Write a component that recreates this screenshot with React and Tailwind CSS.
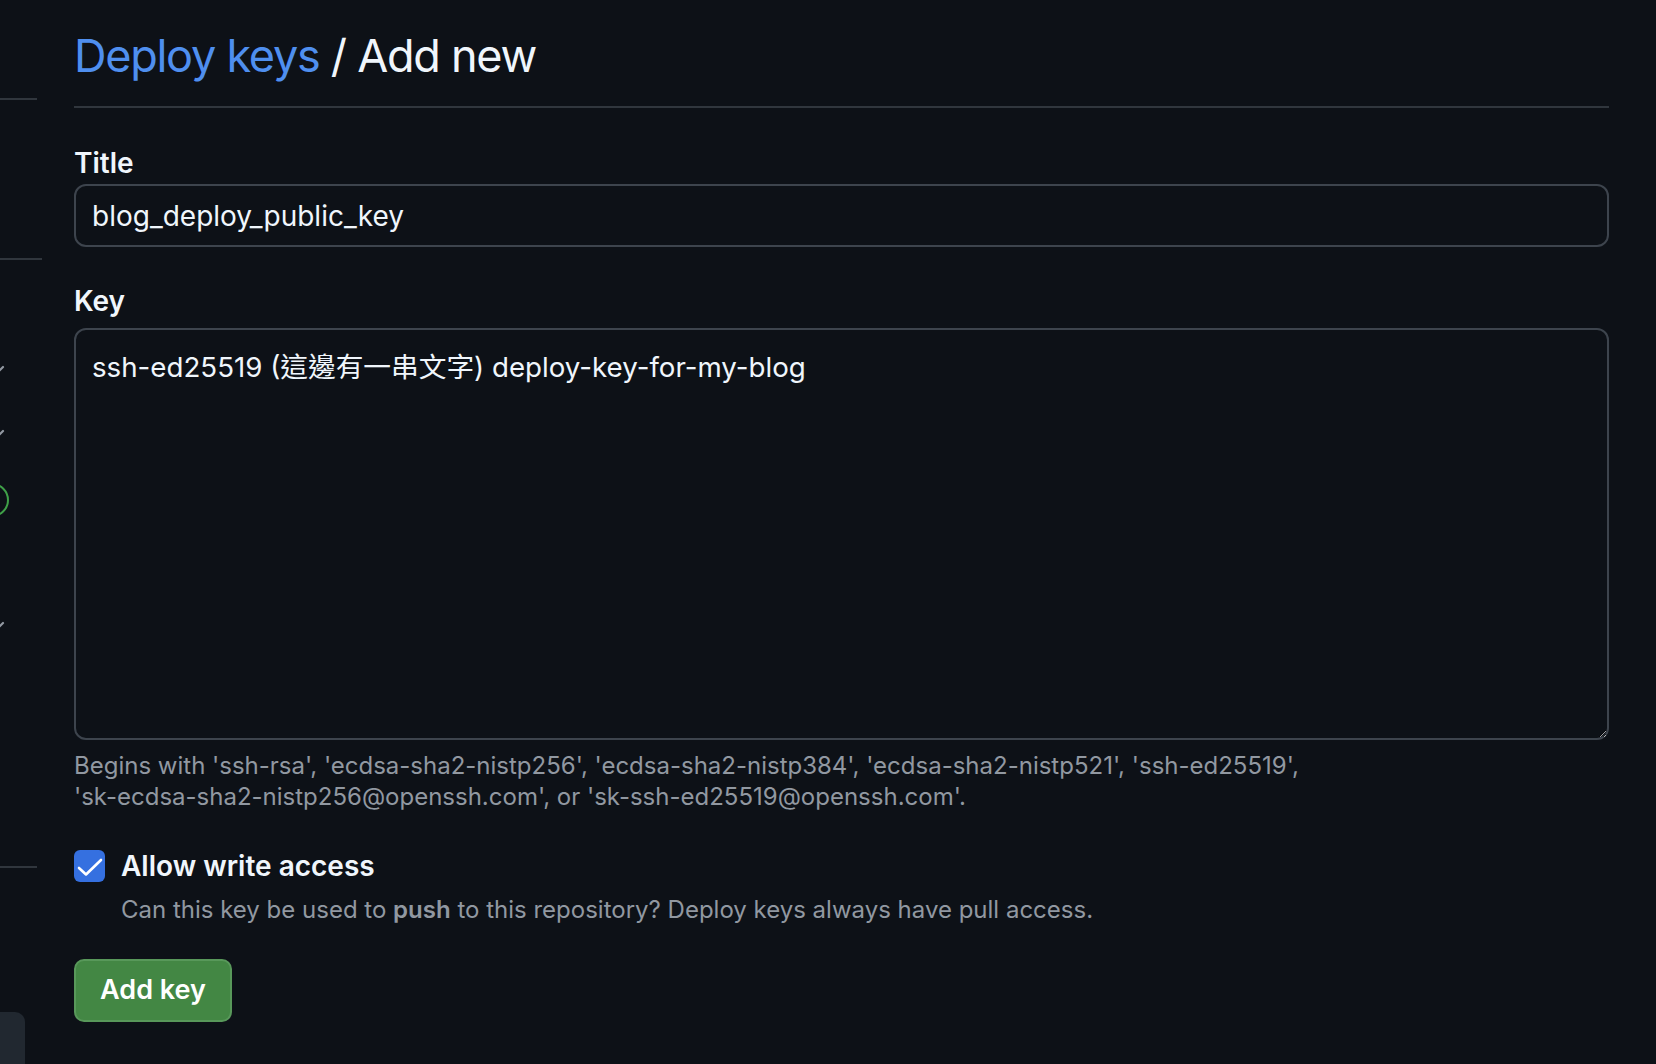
import React from "react";

const font = "font-['Inter','Noto_Sans_CJK_TC',sans-serif]";

const SideCheck = ({ className }) => (
  <svg width="20" height="20" viewBox="0 0 20 20" className={`shrink-0 ${className}`}>
    <path d="M3 10l5 5 9-9" fill="none" stroke="#9198a1" strokeWidth="2.2" strokeLinecap="round" strokeLinejoin="round" />
  </svg>
);

const Sidebar = () => (
  <div className="w-[42px] shrink-0 overflow-hidden flex flex-col">
    <div className="h-[100px] w-[37px] shrink-0 border-b-2 border-[#30363d]" />
    <div className="h-[160px] w-[42px] shrink-0 border-b-2 border-[#30363d]" />
    <SideCheck className="-ml-[14px] mt-[101px]" />
    <SideCheck className="-ml-[14px] mt-[44px]" />
    <div className="-ml-[25px] mt-[38px] h-[34px] w-[34px] shrink-0 rounded-full border-2 border-[#3fa048]" />
    <SideCheck className="-ml-[14px] mt-[100px]" />
    <div className="mt-[229px] w-[37px] shrink-0 border-b-2 border-[#30363d]" />
    <div className="mt-[144px] h-[60px] w-[25px] shrink-0 rounded-tr-[10px] bg-[#212830]" />
  </div>
);

const Label = ({ children }) => (
  <div className="text-[28px] font-semibold leading-[34px] text-[#f0f6fc]">{children}</div>
);

export default function App() {
  return (
    <div className={`${font} flex h-[1064px] w-full overflow-hidden bg-[#0d1117]`}>
      <Sidebar />
      <div className="flex-1 pl-[32px] pr-[47px]">
        <div className="pt-[26px] pb-[20px] border-b-2 border-[#30363d] text-[45px] leading-[60px] tracking-[-0.028em] text-[#f0f6fc]">
          <span className="text-[#4f8fef]">Deploy keys</span> / Add new
        </div>

        <div className="mt-[38px]">
          <Label>Title</Label>
          <div className="mt-[4px] flex h-[63px] items-center rounded-[12px] border-2 border-[#3d444d] px-[16px] text-[28px] text-[#f0f6fc]">
            blog_deploy_public_key
          </div>
        </div>

        <div className="mt-[37px]">
          <Label>Key</Label>
          <textarea
            readOnly
            value="ssh-ed25519 (這邊有一串文字) deploy-key-for-my-blog"
            className="mt-[10px] block h-[412px] w-full resize-y rounded-[12px] border-2 border-[#3d444d] bg-[#0d1117] px-[16px] pt-[18px] pb-[14px] text-[27.7px] leading-[38px] text-[#f0f6fc] outline-none [color-scheme:dark]"
          />
          <div className="mt-[10px] text-[24px] leading-[31px] text-[#9198a1]">
            Begins with 'ssh-rsa', 'ecdsa-sha2-nistp256', 'ecdsa-sha2-nistp384', 'ecdsa-sha2-nistp521', 'ssh-ed25519',
            <br />
            'sk-ecdsa-sha2-nistp256@openssh.com', or 'sk-ssh-ed25519@openssh.com'.
          </div>
        </div>

        <div className="mt-[38px] flex gap-[16px]">
          <div className="flex h-[32px] w-[31px] shrink-0 items-center justify-center rounded-[6px] bg-[#3570e0]">
            <svg width="31" height="32" viewBox="0 0 31 32">
              <path d="M5 18l7 6.5L27 10" fill="none" stroke="#ffffff" strokeWidth="2.6" strokeLinecap="round" strokeLinejoin="round" />
            </svg>
          </div>
          <div>
            <div className="text-[28px] font-semibold leading-[32px] text-[#f0f6fc]">Allow write access</div>
            <div className="mt-[13px] text-[24px] leading-[30px] text-[#9198a1]">
              Can this key be used to <span className="font-semibold">push</span> to this repository? Deploy keys always have pull access.
            </div>
          </div>
        </div>

        <button className="mt-[34px] flex h-[63px] w-[158px] items-center justify-center rounded-[10px] border-2 border-[#58985a] bg-[#438744] text-[27px] font-semibold text-white">
          Add key
        </button>
      </div>
    </div>
  );
}
